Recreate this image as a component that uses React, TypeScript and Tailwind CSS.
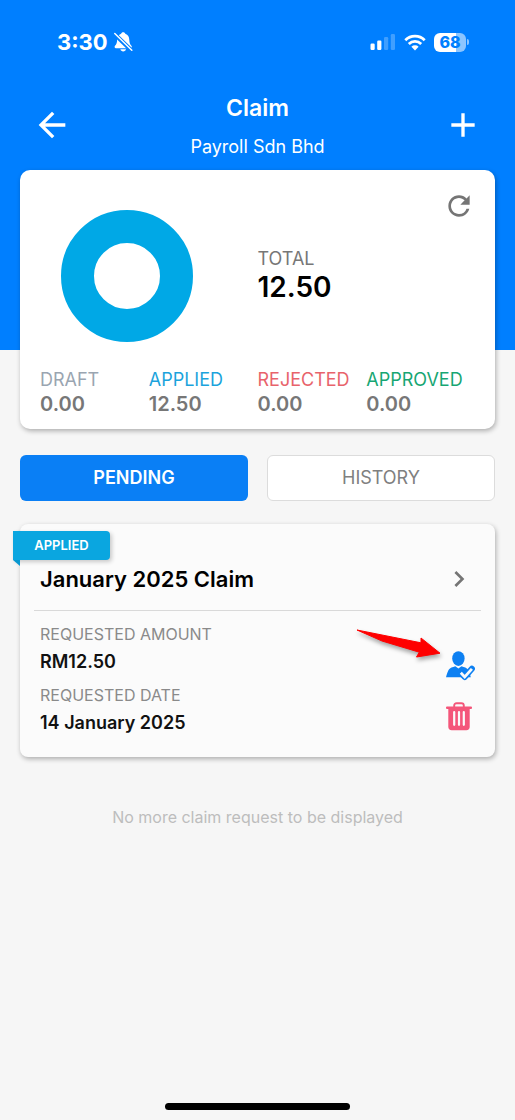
import React from 'react';
import { MdAdd, MdArrowBack, MdChevronRight, MdRefresh } from 'react-icons/md';

const totals = [
  { label: 'DRAFT', value: '0.00', color: 'text-[#9aa5b1]' },
  { label: 'APPLIED', value: '12.50', color: 'text-[#1ba3dc]' },
  { label: 'REJECTED', value: '0.00', color: 'text-[#e8636b]' },
  { label: 'APPROVED', value: '0.00', color: 'text-[#17a673]' },
];

const BellOff: React.FC = () => (
  <svg width="19" height="21" viewBox="0 0 19 21" aria-hidden="true">
    <path d="M9.2 0.2c-1.1 0-1.9.7-2.1 1.6C4.400 2.700 3.200 5 3.100 8c-.1 3-.8 4.300-2.100 5.700-.8.900-.4 2.500.9 2.500h14.600c1.300 0 1.700-1.600.9-2.500-1.300-1.400-2-2.700-2.100-5.700-.1-3-1.300-5.300-4-6.200C11.100.9 10.300.2 9.200.2z" fill="#fff" />
    <path d="M6.400 17.200h5.600c-.3 1.400-1.400 2.200-2.800 2.200s-2.500-.8-2.800-2.200z" fill="#fff" />
    <path d="M0 1.500L18 19" stroke="#007fff" strokeWidth="4.200" />
    <path d="M0.800 1.500L17.800 18.200" stroke="#fff" strokeWidth="1.500" strokeLinecap="round" />
  </svg>
);

const Signal: React.FC = () => (
  <svg width="26" height="18" viewBox="0 0 26 18" fill="#fff" aria-hidden="true">
    <rect x="0.500" y="10.500" width="4.200" height="6.500" rx="1.200" />
    <rect x="7.200" y="7.500" width="4.200" height="9.500" rx="1.200" />
    <rect x="14" y="4" width="4.200" height="13" rx="1.200" opacity="0.25" />
    <rect x="20.800" y="1" width="4.200" height="16" rx="1.200" opacity="0.25" />
  </svg>
);

const Wifi: React.FC = () => (
  <svg width="22" height="17" viewBox="0 0 22 17" fill="none" stroke="#fff" strokeWidth="2.800" aria-hidden="true">
    <path d="M1.300 6.200a13.700 13.700 0 0 1 19.400 0" />
    <path d="M4.800 10a8.800 8.800 0 0 1 12.400 0" />
    <path d="M11 16.400l-3.600-3.600a5.100 5.100 0 0 1 7.200 0z" fill="#fff" stroke="none" />
  </svg>
);

const Battery: React.FC = () => (
  <div className="flex items-center gap-px">
    <div className="flex h-[19px] w-8 items-center justify-center rounded-md bg-linear-to-r from-white from-70% to-[#8cc5ff] to-70% text-base font-extrabold text-[#007fff]">
      68
    </div>
    <span className="h-1.5 w-0.5 rounded-r-full bg-[#8cc5ff]" />
  </div>
);

const UserCheck: React.FC = () => (
  <svg width="29" height="30" viewBox="0 0 29 30" aria-hidden="true">
    <ellipse cx="12.400" cy="7.600" rx="6.200" ry="7.400" fill="#0d80f2" />
    <path d="M0 26.200c.8-2.900 1.700-5.600 2.900-7.600 1.100-1.700 3.600-2.400 6.400-3.300l3.100 2.100 3.100-2.100c2.800.9 5.300 1.600 6.400 3.300 1.200 2 2.100 4.700 2.900 7.600z" fill="#0d80f2" />
    <path d="M14.800 21.800l3.900 4.200 7.200-8.200" fill="none" stroke="#0d80f2" strokeWidth="6" strokeLinejoin="round" strokeLinecap="round" />
    <path d="M14.800 21.800l3.900 4.200 7.200-8.200" fill="none" stroke="#fbfbfb" strokeWidth="2.800" />
  </svg>
);

const Trash: React.FC = () => (
  <svg width="26" height="29" viewBox="0 0 26 29" aria-hidden="true">
    <path d="M8.200 5.500V3.600c0-1.500.9-2.400 2.400-2.400h4.800c1.500 0 2.400.9 2.400 2.400v1.900" fill="none" stroke="#f4567a" strokeWidth="1.900" />
    <rect x="0" y="4.600" width="26" height="2.400" rx="1" fill="#f4567a" />
    <path d="M2.300 6h21.400v18.800c0 2.100-1.300 3.500-3.300 3.500H5.600c-2 0-3.300-1.400-3.300-3.500z" fill="#f4567a" />
    <path d="M8.200 10v12.800M13 10v12.800M17.800 10v12.800" stroke="#fbfbfb" strokeWidth="2.200" strokeLinecap="round" />
  </svg>
);

const PointerArrow: React.FC = () => (
  <svg
    className="pointer-events-none absolute right-[50px] top-[102px] drop-shadow-[1px_3px_2px_rgba(0,0,0,0.35)]"
    width="90"
    height="34"
    viewBox="0 0 90 34"
    aria-hidden="true"
  >
    <path d="M2 4l64 12.800v-4.800L85 27.200 61.500 31l2.800-4.800L27 15z" fill="#fe0000" stroke="#fe0000" strokeLinejoin="round" />
  </svg>
);

const Header: React.FC = () => (
  <header className="bg-[#007fff] px-8 pb-[191px] pt-7 text-white">
    <div className="flex h-7 items-center justify-between pl-[25px] pr-3.5">
      <div className="flex items-center gap-1.5">
        <span className="text-[22px] font-bold leading-7">3:30</span>
        <BellOff />
      </div>
      <div className="flex items-center gap-2">
        <Signal />
        <Wifi />
        <Battery />
      </div>
    </div>
    <div className="mt-[38px] flex items-start justify-between">
      <button type="button" aria-label="Back" className="mt-[11px]">
        <MdArrowBack size={40} />
      </button>
      <div className="text-center">
        <h1 className="text-[23px] font-semibold leading-7">Claim</h1>
        <p className="mt-[13px] text-lg leading-6">Payroll Sdn Bhd</p>
      </div>
      <button type="button" aria-label="Add claim" className="mt-[11px]">
        <MdAdd size={40} />
      </button>
    </div>
  </header>
);

const Summary: React.FC = () => (
  <section className="rounded-[10px] bg-white px-5 pb-[13px] pt-5 shadow-[1px_2px_5px_rgba(0,0,0,0.3)]">
    <div className="flex items-start">
      <div className="w-1/2 pl-[21px] pt-5">
        <svg width="132" height="132" viewBox="0 0 132 132" role="img" aria-label="Claims by status">
          <circle cx="66" cy="66" r="49.500" fill="none" stroke="#00a8e6" strokeWidth="33" />
        </svg>
      </div>
      <div className="flex-1 pt-[57px]">
        <p className="text-lg leading-6 text-[#777]">TOTAL</p>
        <p className="text-[28px] font-semibold leading-8 text-black">12.50</p>
      </div>
      <button type="button" aria-label="Refresh" className="text-[#757575]">
        <MdRefresh size={32} />
      </button>
    </div>
    <dl className="mt-[26px] grid grid-cols-4">
      {totals.map((item) => (
        <div key={item.label}>
          <dt className={`text-lg leading-6 ${item.color}`}>{item.label}</dt>
          <dd className="text-xl font-semibold leading-6 text-[#777]">{item.value}</dd>
        </div>
      ))}
    </dl>
  </section>
);

const ClaimCard: React.FC = () => (
  <article className="relative mt-[23px] rounded-lg bg-[#fbfbfb] px-3.5 pb-[18px] pt-[37px] shadow-[1px_2px_5px_rgba(0,0,0,0.3)]">
    <div className="absolute -left-[7px] top-[7px]">
      <span className="flex h-[29px] w-[97px] items-center justify-center rounded-r bg-[#0aa6e0] text-[13px] font-semibold text-white shadow-[2px_2px_4px_rgba(0,0,0,0.2)]">
        APPLIED
      </span>
      <svg className="block" width="7" height="6" viewBox="0 0 7 6" aria-hidden="true">
        <path d="M0 0h7v6z" fill="#0898d0" />
      </svg>
    </div>
    <div className="flex items-center justify-between border-b border-[#d9d9d9] pb-[13px] pl-1.5 pr-1.5">
      <h2 className="text-[22px] font-semibold leading-9 text-black">January 2025 Claim</h2>
      <button type="button" aria-label="Open claim" className="text-[#757575]">
        <MdChevronRight size={32} />
      </button>
    </div>
    <div className="flex justify-between px-1.5">
      <dl className="pt-[11px]">
        <dt className="text-base leading-6 text-[#8a8a8a]">REQUESTED AMOUNT</dt>
        <dd className="text-lg font-semibold leading-8 text-[#111]">RM12.50</dd>
        <dt className="mt-[5px] text-base leading-6 text-[#8a8a8a]">REQUESTED DATE</dt>
        <dd className="text-lg font-semibold leading-8 text-[#111]">14 January 2025</dd>
      </dl>
      <div className="flex flex-col gap-[21px] pt-10">
        <button type="button" aria-label="Approver">
          <UserCheck />
        </button>
        <button type="button" aria-label="Delete claim">
          <Trash />
        </button>
      </div>
    </div>
    <PointerArrow />
  </article>
);

const App: React.FC = () => {
  return (
    <div className="flex min-h-screen flex-col bg-[#f6f6f6] font-['Inter',sans-serif]">
      <Header />
      <main className="-mt-[180px] px-5">
        <Summary />
        <div className="mt-[26px] grid grid-cols-2 gap-[19px] text-lg">
          <button type="button" className="h-[46px] rounded-md bg-[#0a7ff5] font-semibold text-white">
            PENDING
          </button>
          <button type="button" className="h-[46px] rounded-md border border-[#dcdcdc] bg-white text-[#808080]">
            HISTORY
          </button>
        </div>
        <ClaimCard />
        <p className="mt-12 text-center text-base leading-6 text-[#bdbdbd]">
          No more claim request to be displayed
        </p>
      </main>
      <div className="mx-auto mb-2.5 mt-auto h-[7px] w-[185px] rounded-full bg-black" />
    </div>
  );
};

export default App;
